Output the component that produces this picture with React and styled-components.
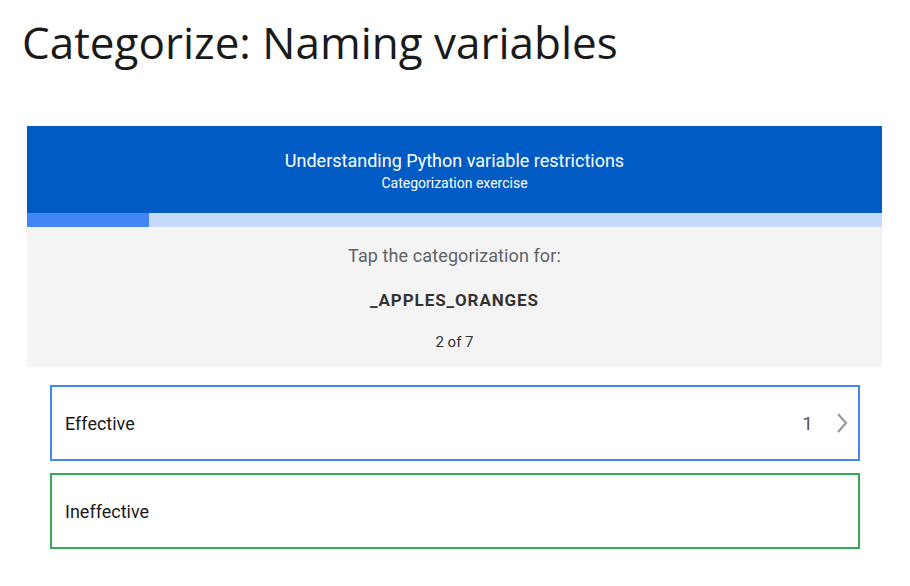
import React from 'react';
import styled, { createGlobalStyle } from 'styled-components';

const GlobalStyle = createGlobalStyle`
  body {
    margin: 0;
    background: #ffffff;
    font-family: 'Roboto', 'Liberation Sans', sans-serif;
  }
`;

const Page = styled.div`
  padding: 12px 28px 0 22px;
`;

const Title = styled.h1`
  margin: 0 0 54px 0;
  font-family: 'Open Sans', 'Liberation Sans', sans-serif;
  font-weight: 400;
  font-size: 44px;
  line-height: 60px;
  color: #1a1a1a;
  letter-spacing: 0px;
`;

const Card = styled.div`
  margin-left: 5px;
  width: 855px;
`;

const Header = styled.div`
  background: #005bc4;
  color: #ffffff;
  height: 87px;
  display: flex;
  flex-direction: column;
  align-items: center;
  justify-content: center;
  padding-top: 2px;
  box-sizing: border-box;
`;

const HeaderTitle = styled.div`
  font-size: 18px;
  line-height: 22px;
`;

const HeaderSub = styled.div`
  margin-top: 2px;
  font-size: 14px;
  line-height: 18px;
`;

const Progress = styled.div`
  height: 14px;
  background: #c6dafb;
`;

const ProgressFill = styled.div`
  height: 100%;
  background: #4285f4;
`;

const Prompt = styled.div`
  background: #f4f4f4;
  height: 140px;
  display: flex;
  flex-direction: column;
  align-items: center;
  padding-top: 18px;
  box-sizing: border-box;
`;

const PromptLabel = styled.div`
  font-size: 18px;
  line-height: 22px;
  color: #5f6368;
  letter-spacing: 0.1px;
`;

const Term = styled.div`
  margin-top: 22px;
  font-size: 17px;
  line-height: 22px;
  font-weight: 700;
  color: #333333;
  letter-spacing: 0.9px;
`;

const Counter = styled.div`
  margin-top: 21px;
  font-size: 15px;
  line-height: 20px;
  color: #333333;
`;

const Options = styled.div`
  display: flex;
  flex-direction: column;
  gap: 12px;
  margin: 18px 0 0 28px;
  width: 810px;
`;

const Option = styled.div`
  height: 76px;
  box-sizing: border-box;
  border: 2px solid ${p => p.$color};
  display: flex;
  align-items: center;
  padding: 0 10px 0 13px;
  font-size: 18px;
  color: #1a1a1a;
`;

const OptionLabel = styled.span`
  flex: 1;
`;

const Count = styled.span`
  font-size: 19px;
  color: #555555;
  margin-right: 23px;
`;

const Chevron = () => (
  <svg width="12" height="22" viewBox="0 0 12 22">
    <path d="M2 2 L10 11 L2 20" fill="none" stroke="#9a9a9a" strokeWidth="2.2" />
  </svg>
);

export default function App() {
  const current = 1;
  const total = 7;
  return (
    <Page>
      <GlobalStyle />
      <Title>Categorize: Naming variables</Title>
      <Card>
        <Header>
          <HeaderTitle>Understanding Python variable restrictions</HeaderTitle>
          <HeaderSub>Categorization exercise</HeaderSub>
        </Header>
        <Progress>
          <ProgressFill style={{ width: `${(current / total) * 100}%` }} />
        </Progress>
        <Prompt>
          <PromptLabel>Tap the categorization for:</PromptLabel>
          <Term>_APPLES_ORANGES</Term>
          <Counter>2 of 7</Counter>
        </Prompt>
      </Card>
      <Options>
        <Option $color="#4285f4">
          <OptionLabel>Effective</OptionLabel>
          <Count>1</Count>
          <Chevron />
        </Option>
        <Option $color="#34a853">
          <OptionLabel>Ineffective</OptionLabel>
        </Option>
      </Options>
    </Page>
  );
}
